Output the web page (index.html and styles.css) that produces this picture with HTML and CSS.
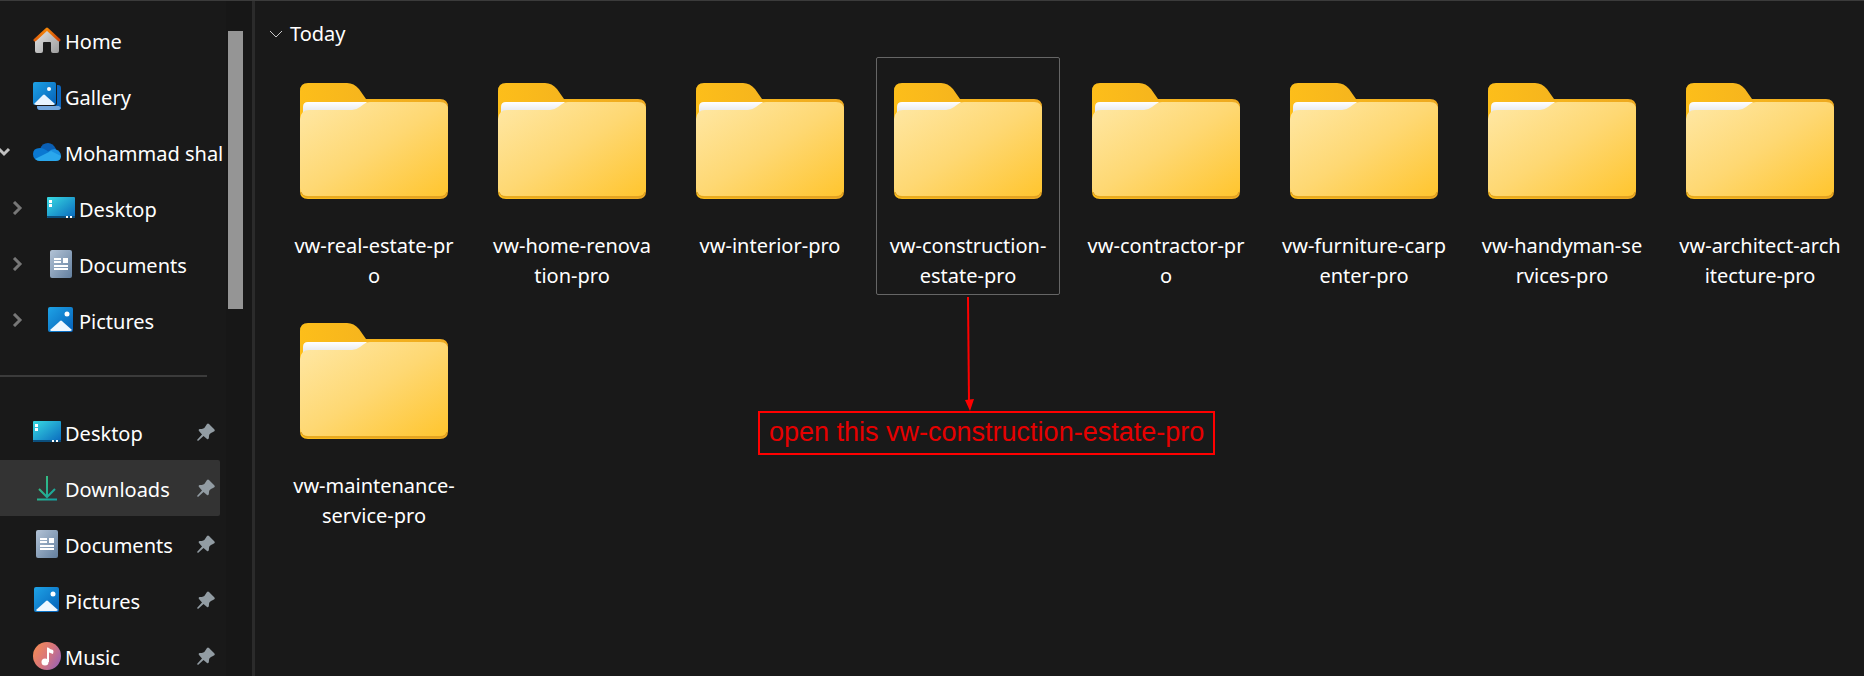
FILE: index.html
```html
<!DOCTYPE html>
<html lang="en">
	<head>
		<meta charset="utf-8">
		<title>Downloads</title>
		<link rel="stylesheet" href="styles.css">
	</head>
	<body>
		<!-- icons -->
		<svg class="defs" width="0" height="0">
			<defs>
				<linearGradient id="gFront" x1="0" y1="0" x2="1" y2="1">
					<stop offset="0" stop-color="#ffe8a6"/>
					<stop offset="0.5" stop-color="#fed873"/>
					<stop offset="1" stop-color="#ffc52e"/>
				</linearGradient>
				<linearGradient id="gBack" x1="0" y1="0" x2="1" y2="0">
					<stop offset="0" stop-color="#fdbe1a"/>
					<stop offset="1" stop-color="#eda921"/>
				</linearGradient>
				<linearGradient id="gPaper" x1="0" y1="0" x2="0" y2="1">
					<stop offset="0" stop-color="#ffffff"/>
					<stop offset="1" stop-color="#d9dce2"/>
				</linearGradient>
				<linearGradient id="gBlue" x1="0" y1="0" x2="1" y2="1">
					<stop offset="0" stop-color="#1ea3e6"/>
					<stop offset="1" stop-color="#0560b8"/>
				</linearGradient>
				<linearGradient id="gDesk" x1="0" y1="0" x2="1" y2="1">
					<stop offset="0" stop-color="#38dbe2"/>
					<stop offset="1" stop-color="#0967bd"/>
				</linearGradient>
				<linearGradient id="gDoc" x1="0" y1="0" x2="1" y2="1">
					<stop offset="0" stop-color="#b3c3d6"/>
					<stop offset="1" stop-color="#637f9e"/>
				</linearGradient>
				<linearGradient id="gRoof" x1="0" y1="0" x2="1" y2="0">
					<stop offset="0" stop-color="#e0600a"/>
					<stop offset="0.5" stop-color="#f58708"/>
					<stop offset="1" stop-color="#cc4206"/>
				</linearGradient>
				<linearGradient id="gWall" x1="0" y1="0" x2="1" y2="1">
					<stop offset="0" stop-color="#e8e8e8"/>
					<stop offset="1" stop-color="#9c9c9c"/>
				</linearGradient>
				<linearGradient id="gMusic" x1="0" y1="0.2" x2="1" y2="0.8">
					<stop offset="0" stop-color="#f58b55"/>
					<stop offset="0.5" stop-color="#d8757b"/>
					<stop offset="1" stop-color="#9862b4"/>
				</linearGradient>
				<linearGradient id="gDown" gradientUnits="userSpaceOnUse" x1="5" y1="5" x2="24" y2="20">
					<stop offset="0" stop-color="#3cc47c"/>
					<stop offset="1" stop-color="#16a3a0"/>
				</linearGradient>
			</defs>
			<symbol id="folder" viewBox="0 0 148 116">
				<path fill="url(#gBack)" d="M0 8Q0 0 8 0H47Q54 0 59 6L66 16H140Q148 16 148 24V108Q148 116 140 116H8Q0 116 0 108Z"/>
				<path fill="url(#gPaper)" d="M3 34V24Q3 19 8 19H67L60 28H12Z"/>
				<path fill="url(#gFront)" d="M0 36Q1 27 9 27H52Q56 27 60 24L64 21Q66 19 70 19H140Q148 19 148 27V105Q148 113 140 113H8Q0 113 0 105Z"/>
				<path fill="none" stroke="#d99b22" stroke-width="1" d="M1 109Q3 114 8 114H140Q145 114 147 109"/>
			</symbol>
			<symbol id="home" viewBox="0 0 28 28">
				<path fill="url(#gWall)" d="M2 13L14 2L26 13V25Q26 27 24 27H20Q18 27 18 25V17Q18 16 17 16H11Q10 16 10 17V25Q10 27 8 27H4Q2 27 2 25Z"/>
				<path fill="none" stroke="url(#gRoof)" stroke-width="3" stroke-linecap="round" stroke-linejoin="round" d="M2 14L14 3L26 14"/>
			</symbol>
			<symbol id="gallery" viewBox="0 0 28 28">
				<rect x="4" y="3" width="24" height="25" rx="3" fill="#0d66bd"/>
				<path fill="#72a5dc" d="M4 24H26L28 26Q27 28 25 28H7Q4 28 4 24Z"/>
				<rect x="-1" y="-1" width="25" height="25" rx="3" fill="#191919"/>
				<rect width="23" height="23" rx="2" fill="url(#gBlue)"/>
				<path fill="#e8f4ff" d="M1 22L9 14Q11 11 13 14L22 22Q21 23 20 23H3Z"/>
				<circle cx="16" cy="7" r="2" fill="#fff"/>
			</symbol>
			<symbol id="cloud" viewBox="0 0 28 28">
				<path fill="#0a5fb4" d="M7 11Q9 5 15 5Q20 5 23 11L20 17L7 15Z"/>
				<path fill="#0a78d1" d="M7 23Q0 22 0 16Q0 10 7 10Q10 10 13 12L20 17L6 23Z"/>
				<path fill="#1a8fe0" d="M15 14Q18 11 22 11Q28 13 28 18L24 20Z"/>
				<path fill="#2aa7ec" d="M2 21L18 13L28 18Q28 23 23 23H7Q4 23 2 21Z"/>
			</symbol>
			<symbol id="desktop" viewBox="0 0 28 28">
				<rect y="3" width="28" height="21" rx="1" fill="url(#gDesk)"/>
				<path fill="#0b4f7d" d="M0 22H28V23Q28 24 27 24H1Q0 24 0 23Z"/>
				<path fill="#fff" d="M2 6H5V9H2ZM2 10H5V13H2ZM19 22H21V24H19ZM23 22H25V24H23Z"/>
			</symbol>
			<symbol id="document" viewBox="0 0 28 28">
				<rect x="3" width="22" height="28" rx="2" fill="url(#gDoc)"/>
				<path fill="#fff" d="M7 8H14V10H7ZM7 11H14V13H7ZM16 8H21V13H16ZM7 15H21V17H7ZM7 18H21V20H7Z"/>
			</symbol>
			<symbol id="picture" viewBox="0 0 28 28">
				<rect x="1" y="1" width="25" height="25" rx="2" fill="url(#gBlue)"/>
				<path fill="#f0f8ff" d="M3 24L12 16Q14 13 16 16L25 24Q24 25 23 25H4Z"/>
				<circle cx="20" cy="8" r="2.500" fill="#fff"/>
			</symbol>
			<symbol id="download" viewBox="0 0 28 28">
				<path fill="none" stroke="url(#gDown)" stroke-width="2" d="M14 2V22M6 15L14 23L22 15M4 25.500H24"/>
			</symbol>
			<symbol id="music" viewBox="0 0 28 28">
				<circle cx="14" cy="14" r="14" fill="url(#gMusic)"/>
				<circle cx="12" cy="20" r="3.500" fill="#fff"/>
				<path fill="#fff" d="M14 5.500Q16 5 17 7L20 8Q21 9 20 12Q18 11 16 10.500V20H14Z"/>
			</symbol>
			<symbol id="pin" viewBox="0 0 18 18">
				<path fill="#929ca3" d="M10 1Q11 0 12 1L17 6Q19 8 16 9L14 10Q12 11 12 13Q12 17 10 16L6.500 13L1 18L0 17L5 11.500L2 8Q1 6 3 6Q7 6 8 4Z"/>
			</symbol>
			<symbol id="chev" viewBox="0 0 14 14">
				<path fill="none" stroke="currentColor" stroke-width="3" d="M3 1L9 7L3 13"/>
			</symbol>
			<symbol id="chevDown" viewBox="0 0 14 14">
				<path fill="none" stroke="currentColor" stroke-width="3" d="M2 4L7 9L12 4"/>
			</symbol>
		</svg>

		<div class="explorer">
			<nav class="sidebar">
				<div class="tree">
					<a class="row" href="#home"><span class="toggle"></span><svg class="icon"><use href="#home"/></svg><span class="name">Home</span></a>
					<a class="row" href="#gallery"><span class="toggle"></span><svg class="icon"><use href="#gallery"/></svg><span class="name">Gallery</span></a>
					<a class="row" href="#cloud"><span class="toggle open"><svg class="arrow"><use href="#chevDown"/></svg></span><svg class="icon"><use href="#cloud"/></svg><span class="name">Mohammad shal</span></a>
					<a class="row child" href="#desktop"><span class="toggle"><svg class="arrow"><use href="#chev"/></svg></span><svg class="icon"><use href="#desktop"/></svg><span class="name">Desktop</span></a>
					<a class="row child" href="#document"><span class="toggle"><svg class="arrow"><use href="#chev"/></svg></span><svg class="icon"><use href="#document"/></svg><span class="name">Documents</span></a>
					<a class="row child" href="#picture"><span class="toggle"><svg class="arrow"><use href="#chev"/></svg></span><svg class="icon"><use href="#picture"/></svg><span class="name">Pictures</span></a>
					<hr>
					<a class="row" href="#desktop"><span class="toggle"></span><svg class="icon"><use href="#desktop"/></svg><span class="name">Desktop</span><svg class="pin"><use href="#pin"/></svg></a>
					<a class="row active" href="#download"><span class="toggle"></span><svg class="icon"><use href="#download"/></svg><span class="name">Downloads</span><svg class="pin"><use href="#pin"/></svg></a>
					<a class="row" href="#document"><span class="toggle"></span><svg class="icon"><use href="#document"/></svg><span class="name">Documents</span><svg class="pin"><use href="#pin"/></svg></a>
					<a class="row" href="#picture"><span class="toggle"></span><svg class="icon"><use href="#picture"/></svg><span class="name">Pictures</span><svg class="pin"><use href="#pin"/></svg></a>
					<a class="row" href="#music"><span class="toggle"></span><svg class="icon"><use href="#music"/></svg><span class="name">Music</span><svg class="pin"><use href="#pin"/></svg></a>
				</div>
				<div class="scrollbar"><div class="thumb"></div></div>
			</nav>

			<main class="files">
				<button class="group" type="button">
					<svg width="14" height="8" viewBox="0 0 14 8"><path fill="none" stroke="#c8c8c8" d="M1 1L7 7L13 1"/></svg>
					Today
				</button>
				<div class="grid">
					<a class="tile" href="#folder"><svg class="folder"><use href="#folder"/></svg><span>vw-real-estate-pr<br>o</span></a>
					<a class="tile" href="#folder"><svg class="folder"><use href="#folder"/></svg><span>vw-home-renova<br>tion-pro</span></a>
					<a class="tile" href="#folder"><svg class="folder"><use href="#folder"/></svg><span>vw-interior-pro</span></a>
					<div class="marked">
						<a class="tile selected" href="#folder"><svg class="folder"><use href="#folder"/></svg><span>vw-construction-<br>estate-pro</span></a>
						<!-- callout hanging below the selected folder -->
						<div class="callout">
							<svg class="pointer" viewBox="0 0 12 115"><path stroke="#f00" stroke-width="2" d="M5 1L6 106"/><path fill="#f00" d="M2 104L11 103L7 115Z"/></svg>
							<p class="note">open this vw-construction-estate-pro</p>
						</div>
					</div>
					<a class="tile" href="#folder"><svg class="folder"><use href="#folder"/></svg><span>vw-contractor-pr<br>o</span></a>
					<a class="tile" href="#folder"><svg class="folder"><use href="#folder"/></svg><span>vw-furniture-carp<br>enter-pro</span></a>
					<a class="tile" href="#folder"><svg class="folder"><use href="#folder"/></svg><span>vw-handyman-se<br>rvices-pro</span></a>
					<a class="tile" href="#folder"><svg class="folder"><use href="#folder"/></svg><span>vw-architect-arch<br>itecture-pro</span></a>
					<a class="tile" href="#folder"><svg class="folder"><use href="#folder"/></svg><span>vw-maintenance-<br>service-pro</span></a>
				</div>
			</main>
		</div>
	</body>
</html>
```
FILE: styles.css
```css
* {
	box-sizing: border-box;
}
body {
	margin: 0;
	background-color: #191919;
	color: #fff;
	font-family: "Noto Sans", sans-serif;
	font-size: 20px;
	line-height: 30px;
}
a {
	color: inherit;
	text-decoration: none;
}
.defs {
	position: absolute;
}
.explorer {
	display: flex;
	height: 100vh;
	overflow: hidden;
	border-top: 1px solid #3b3b3b;
}

/* left side */
.sidebar {
	display: flex;
	flex: none;
	border-right: 3px solid #2b2b2b;
}
.tree {
	width: 226px;
	padding: 11px 6px 0 0;
	overflow: hidden;
}
.row {
	display: flex;
	align-items: center;
	height: 56px;
	padding-right: 5px;
	white-space: nowrap;
}
.row.active {
	background-color: #333;
	border-radius: 0 2px 2px 0;
}
.toggle {
	display: flex;
	flex: none;
	justify-content: center;
	width: 33px;
	color: #c0c0c0;
}
.toggle.open {
	justify-content: flex-start;
	margin-left: -3px;
	width: 36px;
}
.child .toggle {
	justify-content: flex-start;
	width: 47px;
	padding-left: 11px;
	color: #777;
}
.arrow {
	width: 14px;
	height: 14px;
}
.icon {
	flex: none;
	width: 28px;
	height: 28px;
}
.name {
	flex: 1;
	padding: 4px 0 0 4px;
}
.pin {
	flex: none;
	width: 18px;
	height: 18px;
}
hr {
	width: 207px;
	height: 2px;
	margin: 27px 0;
	border: 0;
	background-color: #3b3b3b;
}
.scrollbar {
	width: 26px;
	padding: 30px 9px 0 2px;
	background-color: #171717;
}
.thumb {
	height: 278px;
	background-color: #959595;
}

/* folders */
.files {
	flex: 1;
	min-width: 0;
	padding: 18px 12px 0 14px;
}
.group {
	display: flex;
	align-items: center;
	gap: 7px;
	margin-bottom: 8px;
	padding: 0;
	border: 0;
	background: none;
	color: inherit;
	font: inherit;
}
.grid {
	display: grid;
	grid-template-columns: repeat(auto-fill, 184px);
	gap: 2px 14px;
	padding-left: 13px;
}
.tile {
	display: flex;
	flex-direction: column;
	align-items: center;
	height: 238px;
	padding-top: 25px;
	border: 1px solid transparent;
	text-align: center;
	white-space: nowrap;
}
.tile.selected {
	border-color: #666;
	border-radius: 2px;
}
.folder {
	flex: none;
	width: 148px;
	height: 116px;
	margin-bottom: 32px;
}
.marked {
	position: relative;
}
.callout {
	position: absolute;
	top: 239px;
	left: -118px;
}
.pointer {
	display: block;
	width: 12px;
	height: 115px;
	margin-left: 205px;
}
.note {
	margin: 0;
	padding: 4px 9px 6px;
	border: 2px solid #f00;
	color: #e60000;
	font-family: "Liberation Sans", sans-serif;
	font-size: 27px;
	white-space: nowrap;
}
```
